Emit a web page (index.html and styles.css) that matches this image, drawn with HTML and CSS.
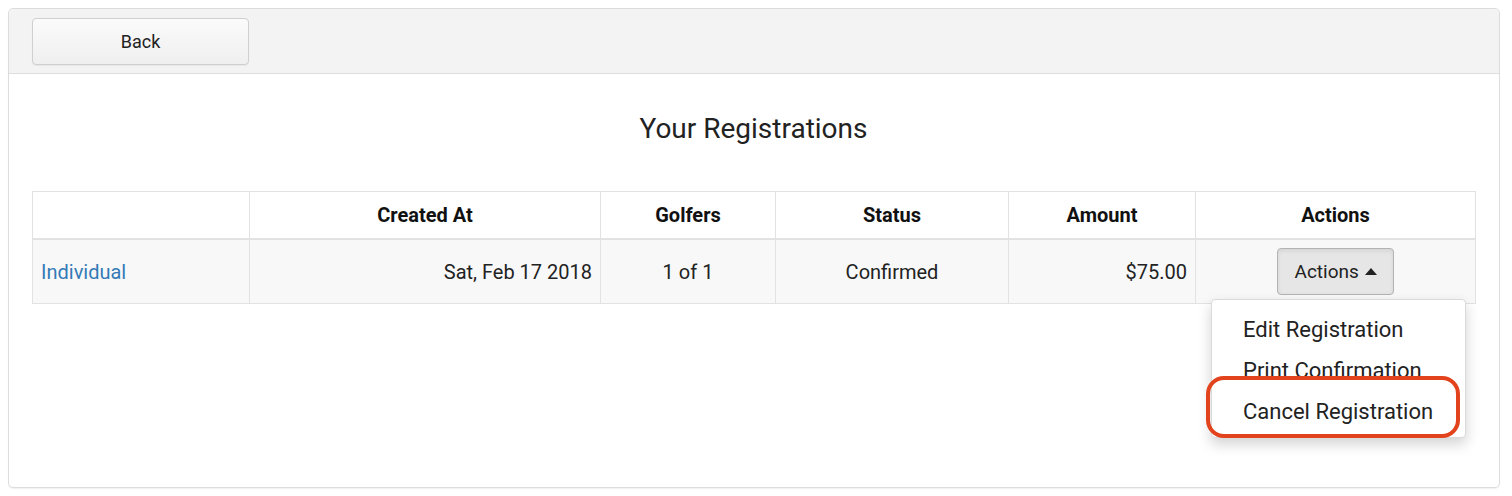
FILE: index.html
```html
<!DOCTYPE html>
<html>
<head>
<meta charset="utf-8">
<link rel="stylesheet" href="styles.css">
</head>
<body>
<div class="panel">
  <div class="panel-head">
    <button class="btn-back">Back</button>
  </div>
  <div class="panel-body">
    <h2 class="title">Your Registrations</h2>
    <table class="regs">
      <colgroup>
        <col style="width:217px"><col style="width:351px"><col style="width:175px"><col style="width:233px"><col style="width:187px"><col style="width:280px">
      </colgroup>
      <thead>
        <tr><th></th><th>Created At</th><th>Golfers</th><th>Status</th><th>Amount</th><th>Actions</th></tr>
      </thead>
      <tbody>
        <tr>
          <td class="left"><a href="#" class="link">Individual</a></td>
          <td class="right">Sat, Feb 17 2018</td>
          <td class="center">1 of 1</td>
          <td class="center">Confirmed</td>
          <td class="right">$75.00</td>
          <td class="center actions-cell">
            <div class="dropup">
              <button class="btn-actions">Actions <span class="caret"></span></button>
              <ul class="menu">
                <li>Edit Registration</li>
                <li>Print Confirmation</li>
                <li>Cancel Registration</li>
                <span class="highlight"></span>
              </ul>
            </div>
          </td>
        </tr>
      </tbody>
    </table>
  </div>
</div>
</body>
</html>
```
FILE: styles.css
```css
html, body { margin: 0; padding: 0; background: #fff; }
body { padding: 8px; font-family: Roboto, "Liberation Sans", sans-serif; color: #333; }
.panel {
  width: 1490px;
  height: 478px;
  border: 1px solid #dcdcdc;
  border-radius: 5px;
  box-shadow: 0 1px 1px rgba(0,0,0,0.06);
}
.panel-head {
  background: #f3f3f3;
  border-bottom: 1px solid #dedede;
  border-radius: 5px 5px 0 0;
  padding: 9px 0 0 23px;
  box-sizing: border-box;
  height: 65px;
}
.btn-back {
  width: 217px;
  height: 47px;
  border: 1px solid #cfcfcf;
  border-radius: 4px;
  background: linear-gradient(#fbfbfb, #efefef);
  font-family: Roboto, "Liberation Sans", sans-serif;
  font-size: 18px;
  color: #222;
  padding: 0;
  box-shadow: 0 1px 1px rgba(0,0,0,0.05);
}
.panel-body { padding: 0 24px 0 23px; }
.title {
  margin: 0;
  padding-top: 36px;
  height: 80px;
  box-sizing: border-box;
  text-align: center;
  font-weight: 400;
  font-size: 28px;
  color: #222;
  line-height: 38px;
}
.regs {
  margin-top: 37px;
  border-collapse: collapse;
  table-layout: fixed;
  width: 1443px;
  font-size: 20px;
}
.regs th, .regs td { border: 1px solid #e2e2e2; }
.regs th {
  height: 46px;
  font-weight: 700;
  color: #111;
  text-align: center;
  padding: 0 8px;
  border-bottom: 2px solid #e2e2e2;
}
.regs td {
  height: 63px;
  background: #f8f8f8;
  padding: 0 8px;
  color: #222;
}
.regs td.left { text-align: left; }
.regs td.right { text-align: right; }
.regs td.center { text-align: center; }
.link { color: #337ab7; text-decoration: none; }
.dropup { position: relative; display: inline-block; vertical-align: middle; }
.btn-actions {
  width: 117px;
  height: 47px;
  border: 1px solid #b3b3b3;
  border-radius: 4px;
  background: #e6e6e6;
  font-family: Roboto, "Liberation Sans", sans-serif;
  font-size: 19px;
  color: #222;
  padding: 0;
  box-shadow: inset 0 2px 4px rgba(0,0,0,0.08);
}
.caret {
  display: inline-block;
  width: 0; height: 0;
  border-left: 6px solid transparent;
  border-right: 6px solid transparent;
  border-bottom: 7px solid #222;
  vertical-align: 3px;
  margin-left: 1px;
}
.menu {
  position: absolute;
  left: -66px;
  top: 51px;
  width: 255px;
  height: 139px;
  box-sizing: border-box;
  margin: 0;
  padding: 9px 0 0 0;
  list-style: none;
  background: #fff;
  border: 1px solid #dadada;
  border-radius: 4px;
  box-shadow: 0 6px 14px rgba(0,0,0,0.18);
  text-align: left;
  z-index: 5;
}
.menu li {
  font-size: 22px;
  line-height: 41px;
  padding-left: 31px;
  color: #222;
  white-space: nowrap;
}
.highlight {
  position: absolute;
  left: -6px;
  top: 76px;
  width: 254px;
  height: 62px;
  box-sizing: border-box;
  border: 4px solid #e2431c;
  border-radius: 18px;
}
```
